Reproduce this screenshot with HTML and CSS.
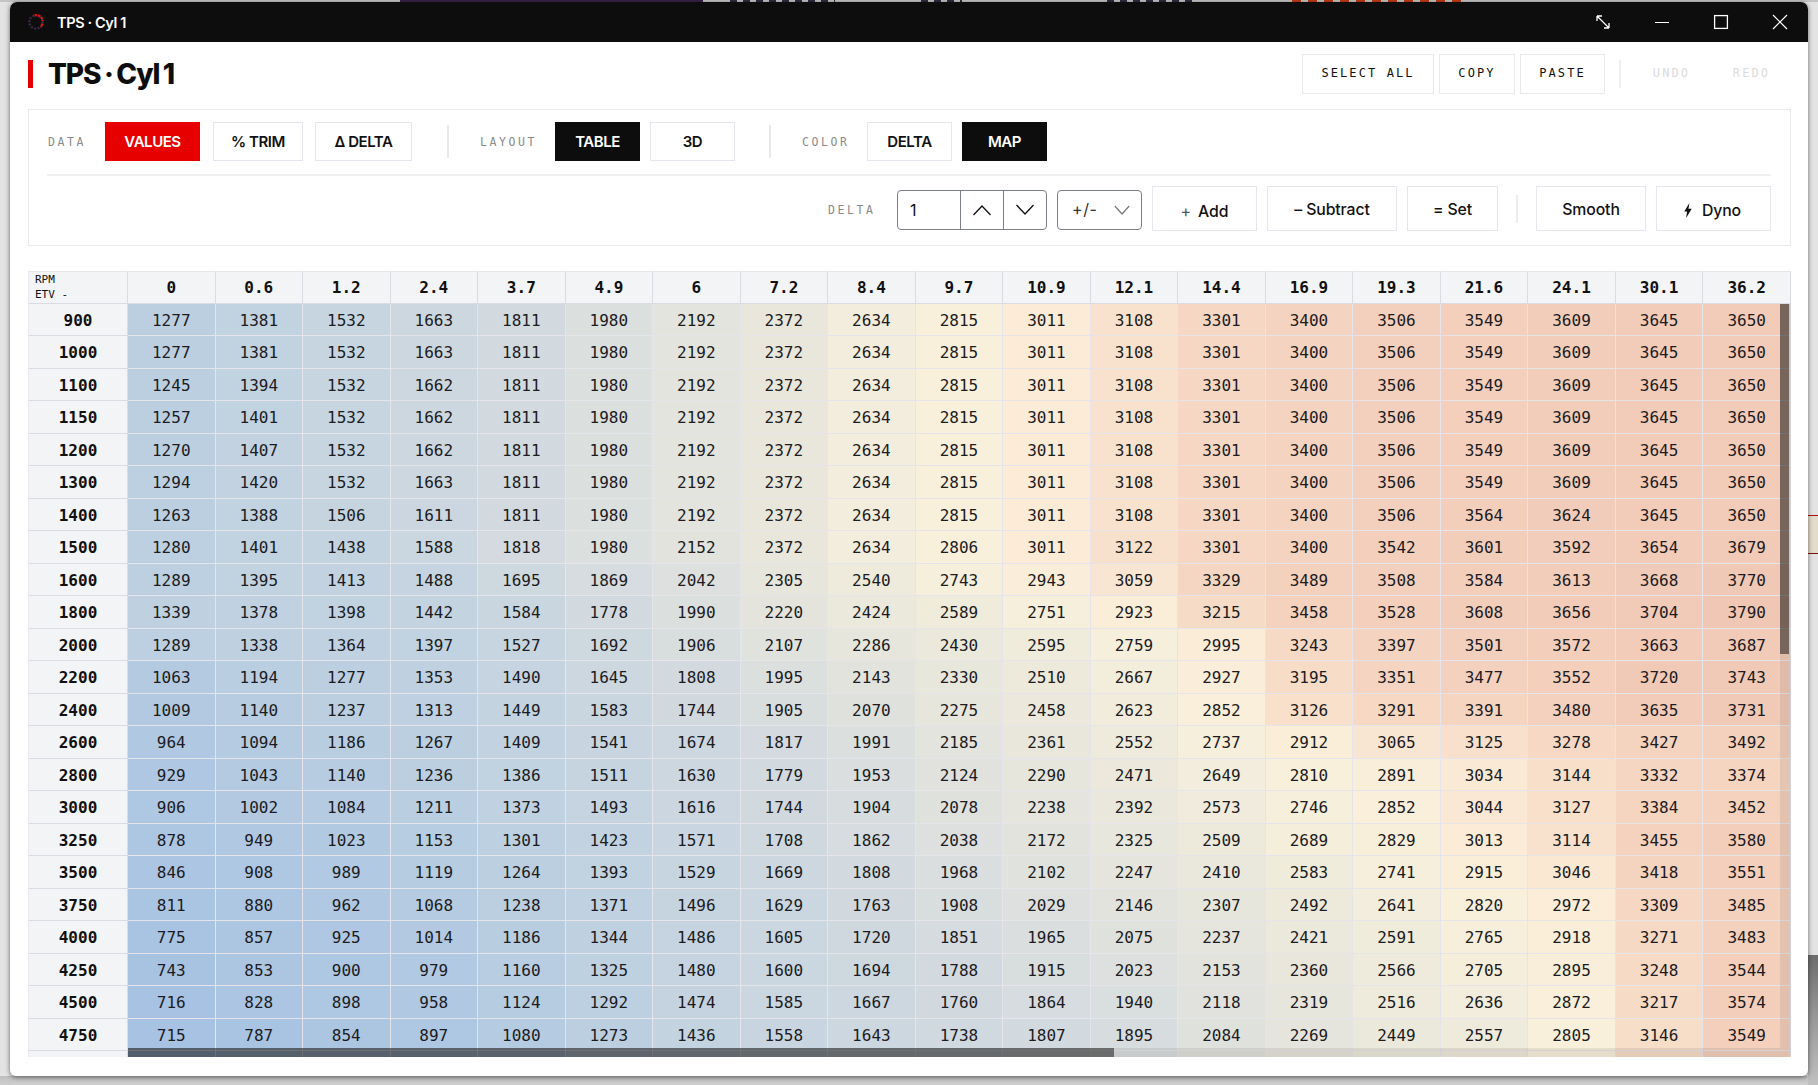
FILE: index.html
```html
<!DOCTYPE html>
<html lang="en">
<head>
<meta charset="utf-8">
<title>TPS · Cyl 1</title>
<link rel="stylesheet" href="styles.css">
</head>
<body>
<div class="window">
  <header class="titlebar">
    <svg class="app-icon" viewBox="0 0 18 18" width="18" height="18" fill="none">
      <circle cx="9" cy="9" r="6.6" stroke="#3a2a48" stroke-width="2.4" stroke-dasharray="2 1.4"/>
      <path d="M7.5 2.2A6.9 6.9 0 0 1 15.8 8.2M15.6 10.8 13.6 14.4" stroke="#e01010" stroke-width="2.2" stroke-dasharray="2.4 1"/>
    </svg>
    <span class="titlebar-text">TPS · Cyl 1</span>
    <div class="win-controls">
      <svg viewBox="0 0 16 16" width="16" height="16" fill="none" stroke="#fff" stroke-width="1.3"><path d="M2 2 14 14M2 2v5M2 2h5M14 14v-5M14 14H9"/></svg>
      <svg viewBox="0 0 16 16" width="16" height="16" fill="none" stroke="#fff" stroke-width="1.2"><path d="M1 8.5H15"/></svg>
      <svg viewBox="0 0 16 16" width="16" height="16" fill="none" stroke="#fff" stroke-width="1.3"><rect x="1.6" y="1.6" width="12.8" height="12.8"/></svg>
      <svg viewBox="0 0 16 16" width="16" height="16" fill="none" stroke="#fff" stroke-width="1.2"><path d="M1 1 15 15M15 1 1 15"/></svg>
    </div>
  </header>

  <main class="content">
    <div class="heading-row">
      <h1 class="page-title">TPS · Cyl 1</h1>
      <div class="edit-actions">
        <button class="mono-btn btn-select">SELECT ALL</button>
        <button class="mono-btn btn-copy">COPY</button>
        <button class="mono-btn btn-paste">PASTE</button>
        <span class="rule-tall"></span>
        <span class="mono-disabled">UNDO</span>
        <span class="mono-disabled">REDO</span>
      </div>
    </div>

    <section class="panel">
      <div class="mode-row">
        <span class="label label-data">DATA</span>
        <button class="btn btn-red btn-values">VALUES</button>
        <button class="btn btn-trim">% TRIM</button>
        <button class="btn btn-delta">Δ DELTA</button>
        <span class="rule rule-mode"></span>
        <span class="label label-layout">LAYOUT</span>
        <button class="btn btn-black btn-85">TABLE</button>
        <button class="btn btn-85 btn-near">3D</button>
        <span class="rule rule-mode"></span>
        <span class="label label-color">COLOR</span>
        <button class="btn btn-85">DELTA</button>
        <button class="btn btn-black btn-85 btn-near">MAP</button>
      </div>
      <div class="delta-row">
        <span class="label label-delta">DELTA</span>
        <div class="stepper">
          <span class="stepper-value">1</span>
          <span class="stepper-arrow">
            <svg viewBox="0 0 20 12" width="20" height="12" fill="none" stroke="#111" stroke-width="1.3"><path d="M1.5 11 10 2l8.500 9"/></svg>
          </span>
          <span class="stepper-arrow">
            <svg viewBox="0 0 20 12" width="20" height="12" fill="none" stroke="#111" stroke-width="1.3"><path d="M1.500 1 10 10l8.500-9"/></svg>
          </span>
        </div>
        <div class="select-box">
          <span>+/-</span>
          <svg viewBox="0 0 16 10" width="16" height="10" fill="none" stroke="#777" stroke-width="1.2"><path d="M.8 1 8 9l7.200-8"/></svg>
        </div>
        <button class="btn-action btn-add"><span class="plus">+</span>Add</button>
        <button class="btn-action btn-sub">– Subtract</button>
        <button class="btn-action btn-set">= Set</button>
        <span class="rule-short"></span>
        <button class="btn-action btn-smooth">Smooth</button>
        <button class="btn-action btn-dyno">
          <svg viewBox="0 0 10 16" width="10" height="15" fill="#111"><path d="M6.500 0 1 9h3l-1 7 6-10H5.500z"/></svg>Dyno
        </button>
      </div>
    </section>

    <div class="table-wrap">
      <table class="grid">
        <thead>
          <tr><th class="corner"><span>RPM</span><span>ETV -</span></th><th>0</th><th>0.6</th><th>1.2</th><th>2.4</th><th>3.7</th><th>4.9</th><th>6</th><th>7.2</th><th>8.4</th><th>9.7</th><th>10.9</th><th>12.1</th><th>14.4</th><th>16.9</th><th>19.3</th><th>21.6</th><th>24.1</th><th>30.1</th><th>36.2</th></tr>
        </thead>
        <tbody>
          <tr><th>900</th><td>1277</td><td>1381</td><td>1532</td><td>1663</td><td>1811</td><td>1980</td><td>2192</td><td>2372</td><td>2634</td><td>2815</td><td>3011</td><td>3108</td><td>3301</td><td>3400</td><td>3506</td><td>3549</td><td>3609</td><td>3645</td><td>3650</td></tr>
          <tr><th>1000</th><td>1277</td><td>1381</td><td>1532</td><td>1663</td><td>1811</td><td>1980</td><td>2192</td><td>2372</td><td>2634</td><td>2815</td><td>3011</td><td>3108</td><td>3301</td><td>3400</td><td>3506</td><td>3549</td><td>3609</td><td>3645</td><td>3650</td></tr>
          <tr><th>1100</th><td>1245</td><td>1394</td><td>1532</td><td>1662</td><td>1811</td><td>1980</td><td>2192</td><td>2372</td><td>2634</td><td>2815</td><td>3011</td><td>3108</td><td>3301</td><td>3400</td><td>3506</td><td>3549</td><td>3609</td><td>3645</td><td>3650</td></tr>
          <tr><th>1150</th><td>1257</td><td>1401</td><td>1532</td><td>1662</td><td>1811</td><td>1980</td><td>2192</td><td>2372</td><td>2634</td><td>2815</td><td>3011</td><td>3108</td><td>3301</td><td>3400</td><td>3506</td><td>3549</td><td>3609</td><td>3645</td><td>3650</td></tr>
          <tr><th>1200</th><td>1270</td><td>1407</td><td>1532</td><td>1662</td><td>1811</td><td>1980</td><td>2192</td><td>2372</td><td>2634</td><td>2815</td><td>3011</td><td>3108</td><td>3301</td><td>3400</td><td>3506</td><td>3549</td><td>3609</td><td>3645</td><td>3650</td></tr>
          <tr><th>1300</th><td>1294</td><td>1420</td><td>1532</td><td>1663</td><td>1811</td><td>1980</td><td>2192</td><td>2372</td><td>2634</td><td>2815</td><td>3011</td><td>3108</td><td>3301</td><td>3400</td><td>3506</td><td>3549</td><td>3609</td><td>3645</td><td>3650</td></tr>
          <tr><th>1400</th><td>1263</td><td>1388</td><td>1506</td><td>1611</td><td>1811</td><td>1980</td><td>2192</td><td>2372</td><td>2634</td><td>2815</td><td>3011</td><td>3108</td><td>3301</td><td>3400</td><td>3506</td><td>3564</td><td>3624</td><td>3645</td><td>3650</td></tr>
          <tr><th>1500</th><td>1280</td><td>1401</td><td>1438</td><td>1588</td><td>1818</td><td>1980</td><td>2152</td><td>2372</td><td>2634</td><td>2806</td><td>3011</td><td>3122</td><td>3301</td><td>3400</td><td>3542</td><td>3601</td><td>3592</td><td>3654</td><td>3679</td></tr>
          <tr><th>1600</th><td>1289</td><td>1395</td><td>1413</td><td>1488</td><td>1695</td><td>1869</td><td>2042</td><td>2305</td><td>2540</td><td>2743</td><td>2943</td><td>3059</td><td>3329</td><td>3489</td><td>3508</td><td>3584</td><td>3613</td><td>3668</td><td>3770</td></tr>
          <tr><th>1800</th><td>1339</td><td>1378</td><td>1398</td><td>1442</td><td>1584</td><td>1778</td><td>1990</td><td>2220</td><td>2424</td><td>2589</td><td>2751</td><td>2923</td><td>3215</td><td>3458</td><td>3528</td><td>3608</td><td>3656</td><td>3704</td><td>3790</td></tr>
          <tr><th>2000</th><td>1289</td><td>1338</td><td>1364</td><td>1397</td><td>1527</td><td>1692</td><td>1906</td><td>2107</td><td>2286</td><td>2430</td><td>2595</td><td>2759</td><td>2995</td><td>3243</td><td>3397</td><td>3501</td><td>3572</td><td>3663</td><td>3687</td></tr>
          <tr><th>2200</th><td>1063</td><td>1194</td><td>1277</td><td>1353</td><td>1490</td><td>1645</td><td>1808</td><td>1995</td><td>2143</td><td>2330</td><td>2510</td><td>2667</td><td>2927</td><td>3195</td><td>3351</td><td>3477</td><td>3552</td><td>3720</td><td>3743</td></tr>
          <tr><th>2400</th><td>1009</td><td>1140</td><td>1237</td><td>1313</td><td>1449</td><td>1583</td><td>1744</td><td>1905</td><td>2070</td><td>2275</td><td>2458</td><td>2623</td><td>2852</td><td>3126</td><td>3291</td><td>3391</td><td>3480</td><td>3635</td><td>3731</td></tr>
          <tr><th>2600</th><td>964</td><td>1094</td><td>1186</td><td>1267</td><td>1409</td><td>1541</td><td>1674</td><td>1817</td><td>1991</td><td>2185</td><td>2361</td><td>2552</td><td>2737</td><td>2912</td><td>3065</td><td>3125</td><td>3278</td><td>3427</td><td>3492</td></tr>
          <tr><th>2800</th><td>929</td><td>1043</td><td>1140</td><td>1236</td><td>1386</td><td>1511</td><td>1630</td><td>1779</td><td>1953</td><td>2124</td><td>2290</td><td>2471</td><td>2649</td><td>2810</td><td>2891</td><td>3034</td><td>3144</td><td>3332</td><td>3374</td></tr>
          <tr><th>3000</th><td>906</td><td>1002</td><td>1084</td><td>1211</td><td>1373</td><td>1493</td><td>1616</td><td>1744</td><td>1904</td><td>2078</td><td>2238</td><td>2392</td><td>2573</td><td>2746</td><td>2852</td><td>3044</td><td>3127</td><td>3384</td><td>3452</td></tr>
          <tr><th>3250</th><td>878</td><td>949</td><td>1023</td><td>1153</td><td>1301</td><td>1423</td><td>1571</td><td>1708</td><td>1862</td><td>2038</td><td>2172</td><td>2325</td><td>2509</td><td>2689</td><td>2829</td><td>3013</td><td>3114</td><td>3455</td><td>3580</td></tr>
          <tr><th>3500</th><td>846</td><td>908</td><td>989</td><td>1119</td><td>1264</td><td>1393</td><td>1529</td><td>1669</td><td>1808</td><td>1968</td><td>2102</td><td>2247</td><td>2410</td><td>2583</td><td>2741</td><td>2915</td><td>3046</td><td>3418</td><td>3551</td></tr>
          <tr><th>3750</th><td>811</td><td>880</td><td>962</td><td>1068</td><td>1238</td><td>1371</td><td>1496</td><td>1629</td><td>1763</td><td>1908</td><td>2029</td><td>2146</td><td>2307</td><td>2492</td><td>2641</td><td>2820</td><td>2972</td><td>3309</td><td>3485</td></tr>
          <tr><th>4000</th><td>775</td><td>857</td><td>925</td><td>1014</td><td>1186</td><td>1344</td><td>1486</td><td>1605</td><td>1720</td><td>1851</td><td>1965</td><td>2075</td><td>2237</td><td>2421</td><td>2591</td><td>2765</td><td>2918</td><td>3271</td><td>3483</td></tr>
          <tr><th>4250</th><td>743</td><td>853</td><td>900</td><td>979</td><td>1160</td><td>1325</td><td>1480</td><td>1600</td><td>1694</td><td>1788</td><td>1915</td><td>2023</td><td>2153</td><td>2360</td><td>2566</td><td>2705</td><td>2895</td><td>3248</td><td>3544</td></tr>
          <tr><th>4500</th><td>716</td><td>828</td><td>898</td><td>958</td><td>1124</td><td>1292</td><td>1474</td><td>1585</td><td>1667</td><td>1760</td><td>1864</td><td>1940</td><td>2118</td><td>2319</td><td>2516</td><td>2636</td><td>2872</td><td>3217</td><td>3574</td></tr>
          <tr><th>4750</th><td>715</td><td>787</td><td>854</td><td>897</td><td>1080</td><td>1273</td><td>1436</td><td>1558</td><td>1643</td><td>1738</td><td>1807</td><td>1895</td><td>2084</td><td>2269</td><td>2449</td><td>2557</td><td>2805</td><td>3146</td><td>3549</td></tr>
        </tbody>
      </table>
      <div class="scroll-v"><span class="scroll-v-thumb"></span></div>
      <div class="scroll-h"><span class="scroll-h-thumb"></span></div>
    </div>
  </main>
</div>
<script src="heatmap.js"></script>
</body>
</html>
```

FILE: styles.css
```css
* { box-sizing: border-box; }
html, body { height: 100%; }
body {
  margin: 0;
  height: 1085px;
  padding: 2px 10px 9px;
  overflow: hidden;
  font-family: Inter, "Noto Sans", sans-serif;
  color: #111;
  background:
    linear-gradient(#b01010, #b01010) 1808px 515px / 10px 1px no-repeat,
    linear-gradient(#7a1010, #7a1010) 1808px 553px / 10px 1px no-repeat,
    linear-gradient(#e4dccb, #e4dccb) 1808px 516px / 10px 37px no-repeat,
    linear-gradient(#6d6d6d, #9a9a9a 50%, #c0c0c0) 1808px 955px / 10px 130px no-repeat,
    linear-gradient(#3a2348, #3a2348) 400px 0 / 303px 2px no-repeat,
    repeating-linear-gradient(90deg, #2c2c40 0 7px, transparent 7px 13px) 730px 0 / 105px 2px no-repeat,
    repeating-linear-gradient(90deg, #2c2c40 0 7px, transparent 7px 13px) 921px 0 / 41px 2px no-repeat,
    repeating-linear-gradient(90deg, #2c2c40 0 7px, transparent 7px 13px) 1107px 0 / 90px 2px no-repeat,
    repeating-linear-gradient(90deg, #c43a10 0 9px, transparent 9px 16px) 1292px 0 / 175px 2px no-repeat,
    linear-gradient(#c4c4c4, #c4c4c4) 0 0 / 100% 2px no-repeat,
    linear-gradient(#bdbdbd, #cfcfcf) 0 1076px / 100% 9px no-repeat,
    #e3e3e3;
}

.window {
  width: 1798px;
  height: 1074px;
  display: flex;
  flex-direction: column;
  background: #fff;
  border-radius: 7px 7px 6px 6px;
  box-shadow: 0 1px 5px rgba(0, 0, 0, .55);
  overflow: hidden;
}

.titlebar {
  flex: none;
  height: 40px;
  display: flex;
  align-items: center;
  padding-left: 17px;
  background: #0d0d0d;
  color: #fff;
}
.app-icon { margin-right: 12px; }
.titlebar-text { font-size: 14.500px; font-weight: 600; letter-spacing: -.3px; word-spacing: -.3px; }
.win-controls {
  margin-left: auto;
  margin-right: 20px;
  display: flex;
  gap: 43px;
}

.content { flex: 1; min-height: 0; display: flex; flex-direction: column; }

.heading-row {
  flex: none;
  height: 67px;
  display: flex;
  padding: 12px 18px 0 18px;
  justify-content: space-between;
}
.page-title {
  margin: 6px 0 0;
  height: 28px;
  padding-left: 15px;
  border-left: 5px solid #e60000;
  font-size: 28px;
  line-height: 29px;
  font-weight: 800;
  letter-spacing: -1.100px;
  word-spacing: -1.500px;
  color: #0d0d0d;
}
.edit-actions { display: flex; align-items: flex-start; gap: 5px; }
.mono-btn {
  height: 40px;
  padding: 0 0 2px;
  border: 1px solid #e8e8ed;
  background: #fff;
  color: #111;
  font: 500 12px "DejaVu Sans Mono", monospace;
  letter-spacing: 2.100px;
}
.btn-select { width: 132px; }
.btn-copy { width: 76px; }
.btn-paste { width: 85px; }
.rule-tall { width: 2px; height: 28px; margin: 6px 9px 0 9px; background: #eceef0; }
.mono-disabled {
  width: 80px;
  height: 40px;
  padding-left: 3px;
  text-align: center;
  margin-left: -5px;
  font: 500 12px/38px "DejaVu Sans Mono", monospace;
  letter-spacing: 2.100px;
  color: #dcdcdc;
}

.panel {
  flex: none;
  height: 137px;
  margin: 0 17px 0 18px;
  padding: 12px 19px 0 18px;
  border: 1px solid #e8e8ed;
}
.mode-row {
  height: 54px;
  display: flex;
  align-items: flex-start;
  border-bottom: 2px solid #f0f0f3;
}
.label {
  flex: none;
  font: 500 11.500px/40px "DejaVu Sans Mono", monospace;
  letter-spacing: 2.600px;
  color: #8b8b8b;
}
.label-data { width: 58px; padding-left: 1px; }
.label-layout { width: 76px; padding-left: 1px; }
.label-color { width: 66px; padding-left: 1px; }
.label-delta { width: 69px; line-height: 48px; }

.btn {
  flex: none;
  height: 39px;
  padding: 0;
  border: 1px solid #e6e6ee;
  background: #fff;
  color: #111;
  font: 600 15px Inter, sans-serif;
  letter-spacing: -.45px;
}
.btn-red { background: #e60000; border-color: #e60000; color: #fff; }
.btn-black { background: #0d0d0d; border-color: #0d0d0d; color: #fff; }
.btn-values { width: 95px; }
.btn-trim { width: 90px; margin-left: 13px; }
.btn-delta { width: 97px; margin-left: 12px; }
.btn-85 { width: 85px; }
.btn-near { margin-left: 10px; }
.rule { flex: none; width: 2px; height: 33px; margin-top: 3px; background: #e8e8ec; }
.rule-mode { margin-left: 35px; margin-right: 30px; }
.btn-near + .rule-mode { margin-left: 34px; }

.delta-row {
  height: 46px;
  margin-top: 10px;
  display: flex;
  align-items: flex-start;
  justify-content: flex-end;
  gap: 10px;
}
.delta-row .label { margin-right: -10px; }
.stepper {
  flex: none;
  width: 150px;
  height: 40px;
  margin-top: 4px;
  display: flex;
  border: 1px solid #7b8086;
  border-radius: 4px;
}
.stepper-value { flex: none; width: 62px; padding-left: 12px; font-size: 16px; line-height: 38px; }
.stepper-arrow {
  flex: 1;
  display: flex;
  align-items: center;
  justify-content: center;
  border-left: 1px solid #7b8086;
}
.select-box {
  flex: none;
  width: 85px;
  height: 40px;
  margin-top: 4px;
  padding: 0 11px 0 14px;
  display: flex;
  align-items: center;
  justify-content: space-between;
  border: 1px solid #7b8086;
  border-radius: 4px;
  font-size: 16px;
  letter-spacing: .6px;
  color: #333;
}
.select-box span { margin-top: -2px; }
.btn-action {
  flex: none;
  height: 45px;
  padding: 1px 0 0;
  border: 1px solid #e6e6ee;
  background: #fff;
  color: #111;
  font: 500 15.800px Inter, sans-serif;
  letter-spacing: -.1px;
}
.btn-add { width: 105px; padding: 5px 0 0; }
.plus { color: #555; font-weight: 400; margin-right: 7px; font-size: 16px; }
.btn-sub { width: 130px; }
.btn-set { width: 91px; }
.rule-short { flex: none; width: 2px; height: 28px; margin: 9px 8px 0; background: #eceef0; }
.btn-smooth { width: 110px; }
.btn-dyno {
  width: 115px;
  padding: 4px 3px 0 0;
  display: flex;
  align-items: center;
  justify-content: center;
  gap: 9px;
}

.table-wrap {
  position: relative;
  flex: none;
  height: 786px;
  margin: 25px 17px 0 18px;
  overflow: hidden;
}
.grid {
  width: 100%;
  table-layout: fixed;
  border-collapse: separate;
  border-spacing: 0;
  font-family: "DejaVu Sans Mono", monospace;
}
.grid tr { height: 32.500px; }
.grid th, .grid td { padding: 0; text-align: center; }
.grid tbody th, .grid td { padding-top: 2px; }
.grid th {
  background: #f3f4f6;
  color: #111;
  font-size: 16px;
  font-weight: 700;
  border-right: 1px solid #d9dde3;
  border-bottom: 1px solid #d9dde3;
}
.grid thead th { border-top: 1px solid #e6e8ec; }
.grid td {
  font-size: 16px;
  color: #1c1c22;
  border-right: 1px solid #e4e4ea;
  border-bottom: 1px solid #e4e4ea;
}
.grid .corner {
  width: 100px;
  padding: 0 0 0 6px;
  text-align: left;
  font-size: 11px;
  font-weight: 500;
  line-height: 15px;
  border-left: 1px solid #e6e8ec;
}
.corner span { display: block; }
.grid tbody th { border-left: 1px solid #e6e8ec; }

.scroll-v {
  position: absolute;
  top: 33px;
  right: 0;
  bottom: 9px;
  width: 11px;
  background: rgba(110, 90, 70, .12);
}
.scroll-v-thumb {
  display: block;
  width: 9px;
  height: 350px;
  background: rgba(0, 0, 0, .47);
}
.scroll-h {
  position: absolute;
  left: 100px;
  right: 0;
  bottom: 0;
  height: 9px;
  background: rgba(110, 100, 90, .14);
}
.scroll-h-thumb {
  display: block;
  width: 986px;
  height: 100%;
  background: rgba(0, 0, 0, .47);
}
```

FILE: heatmap.js
```js
// Paints every table cell from its value along the map's colour ramp.
var stops = [
  [700, [166, 194, 226]],
  [1300, [189, 208, 225]],
  [1800, [211, 218, 223]],
  [2150, [226, 227, 221]],
  [2500, [237, 234, 220]],
  [2800, [248, 240, 219]],
  [3000, [251, 236, 216]],
  [3150, [247, 222, 201]],
  [3350, [245, 213, 193]],
  [3800, [240, 199, 181]]
];

function rampColour(value) {
  var v = Math.max(stops[0][0], Math.min(value, stops[stops.length - 1][0]));
  for (var i = 1; i < stops.length; i++) {
    if (v <= stops[i][0]) {
      var a = stops[i - 1], b = stops[i];
      var t = (v - a[0]) / (b[0] - a[0]);
      return "rgb(" + a[1].map(function (c, k) {
        return Math.round(c + (b[1][k] - c) * t);
      }).join(",") + ")";
    }
  }
}

var rows = document.querySelectorAll(".grid tbody tr");
rows.forEach(function (row) {
  row.querySelectorAll("td").forEach(function (cell) {
    cell.style.background = rampColour(Number(cell.textContent));
  });
});

// The row below the fold only shows its top edge behind the scrollbar.
var last = rows[rows.length - 1].cloneNode(true);
last.querySelectorAll("th, td").forEach(function (cell) {
  cell.textContent = "";
});
rows[0].parentNode.appendChild(last);
```
